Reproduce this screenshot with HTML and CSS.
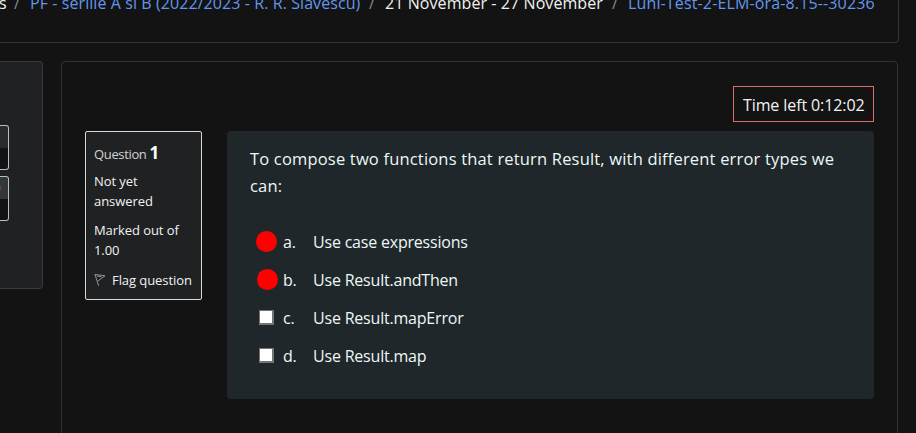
FILE: index.html
```html
<!DOCTYPE html>
<html lang="en">
<head>
<meta charset="utf-8">
<title>Quiz</title>
<link rel="stylesheet" href="styles.css">
</head>
<body>
<header class="page-header">
  <nav class="breadcrumb">
    <span class="crumb crumb-first">s</span><span class="sep">/</span>
    <a class="crumb link crumb-course">PF - seriile A si B (2022/2023 - R. R. Slavescu)</a><span class="sep">/</span>
    <span class="crumb crumb-week">21 November - 27 November</span><span class="sep">/</span>
    <a class="crumb link crumb-quiz">Luni-Test-2-ELM-ora-8.15--30236</a>
  </nav>
</header>
<div class="columns">
  <aside class="quiz-nav">
    <div class="nav-button"></div>
    <div class="nav-button flagged"></div>
  </aside>
  <main class="quiz">
    <div class="timer"><span>Time left 0:12:02</span></div>
    <div class="question">
      <section class="info">
        <h3 class="number">Question <b>1</b></h3>
        <p>Not yet<br>answered</p>
        <p>Marked out of<br>1.00</p>
        <div class="flag">
          <svg width="12" height="14" viewBox="0 0 12 14" fill="none" stroke="#929292"><path d="M.8 1.2 4.7 12.8M1 1.5 11 2.7 3.4 8.4M2.6 3 7.6 3.8"/></svg>
          <span>Flag question</span>
        </div>
      </section>
      <section class="content">
        <p class="prompt">To compose two functions that return Result, with different error types we<br>can:</p>
        <ul class="answers">
          <li><i class="box"><i class="dot"></i></i><span class="letter">a.</span><span>Use case expressions</span></li>
          <li><i class="box"><i class="dot shifted"></i></i><span class="letter">b.</span><span>Use Result.andThen</span></li>
          <li><i class="box"></i><span class="letter">c.</span><span>Use Result.mapError</span></li>
          <li><i class="box"></i><span class="letter">d.</span><span>Use Result.map</span></li>
        </ul>
      </section>
    </div>
  </main>
</div>
</body>
</html>
```
FILE: styles.css
```css
* { box-sizing: border-box; }
body {
  margin: 0;
  height: 433px;
  overflow: hidden;
  background: #131313;
  color: #f2f2f2;
  font: 16px/27px "Segoe UI", "Open Sans", "Noto Sans", sans-serif;
  letter-spacing: -0.2px;
}
p, h3, ul { margin: 0; padding: 0; }
.page-header {
  width: 899px;
  height: 43px;
  overflow: hidden;
  border: solid #343536;
  border-width: 0 1px 1px 0;
  border-radius: 0 0 4px 0;
}
.breadcrumb {
  display: flex;
  margin-top: -10px;
  white-space: nowrap;
  letter-spacing: 0.08px;
}
.crumb-first { width: 6px; margin-left: -1px; }
.link { color: #6297ec; }
.crumb-course { width: 330px; }
.crumb-week { width: 218px; }
.crumb-quiz { letter-spacing: 0.14px; }
.sep { width: 25px; padding-left: 9px; color: #85898d; }
.columns {
  display: grid;
  grid-template-columns: 43px 837px;
  gap: 18px;
  margin-top: 18px;
}
.quiz-nav {
  height: 228px;
  padding-top: 63px;
  background: #202122;
  border: 1px solid #383a3c;
  border-left: 0;
  border-radius: 0 4px 4px 0;
}
.nav-button {
  width: 9px;
  height: 45px;
  margin-bottom: 6px;
  border: 1px solid #b9bec2;
  border-left: 0;
  border-radius: 0 3px 3px 0;
  background: linear-gradient(#282c2f 22px, #131313 22px);
}
.nav-button.flagged {
  background: radial-gradient(circle at -1px 11px, #713b40 2px, transparent 3px), linear-gradient(#343739 22px, #131313 22px);
}
.quiz {
  height: 390px;
  padding: 24px 23px;
  border: 1px solid #303132;
  border-radius: 4px;
}
.timer {
  width: 141px;
  height: 36px;
  margin-left: auto;
  padding: 5px 9px;
  border: 1px solid #d5735f;
  letter-spacing: -0.1px;
  white-space: nowrap;
}
.question {
  display: flex;
  align-items: flex-start;
  gap: 25px;
  margin-top: 9px;
}
.info {
  width: 117px;
  height: 169px;
  padding: 7px 8px;
  border: 1px solid #d6dadd;
  border-radius: 2px;
  background: #202122;
  font-size: 13px;
  line-height: 20px;
  letter-spacing: -0.07px;
  white-space: nowrap;
}
.number {
  height: 32px;
  font-size: 13px;
  font-weight: 400;
  line-height: 28px;
  letter-spacing: -0.35px;
  color: #d3d3d3;
}
.number b { font-size: 17px; color: #fff; }
.info p { margin-bottom: 9px; }
.flag { display: flex; gap: 6px; align-items: center; padding-top: 1px; }
.content {
  width: 647px;
  height: 268px;
  padding: 14px 23px;
  border-radius: 4px;
  background: #1f272a;
  color: #edf8f6;
}
.prompt {
  height: 77px;
  font-size: 16.5px;
  letter-spacing: 0.18px;
  white-space: nowrap;
}
.answers { list-style: none; }
.answers li {
  display: flex;
  align-items: center;
  height: 38px;
  padding-left: 9px;
}
.answers span { padding-top: 2px; }
.box {
  position: relative;
  width: 15px;
  height: 15px;
  margin-right: 9px;
  border: solid #747474;
  border-width: 1px 2px 2px 1px;
  background: #fff;
}
.box:has(.dot) { border-color: transparent; background: none; }
.box:has(.shifted) { border-left-color: #627174; }
.dot {
  position: absolute;
  left: -4px;
  top: -4px;
  width: 21px;
  height: 21px;
  border-radius: 50%;
  background: #f00;
}
.dot.shifted { left: -3px; }
.letter { width: 30px; }
```
